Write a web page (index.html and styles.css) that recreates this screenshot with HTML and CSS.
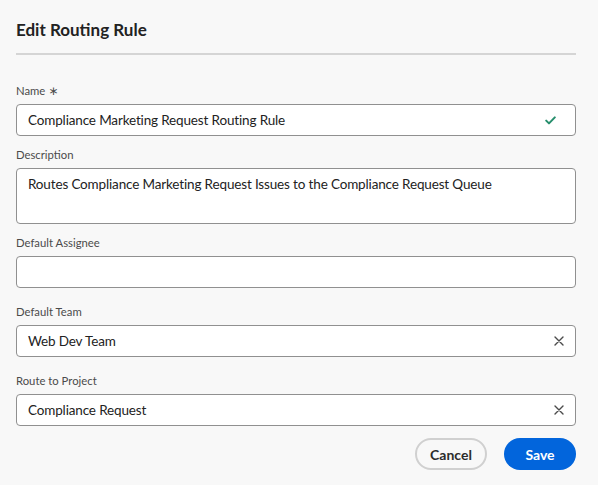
FILE: index.html
```html
<!DOCTYPE html>
<html>
	<head>
		<meta charset="UTF-8">
		<title>Edit Routing Rule</title>
		<link rel="stylesheet" href="styles.css">
	</head>
	<body>
		<div id="dialog">
			<h2 class="title">Edit Routing Rule</h2>
			<div class="divider"></div>
			<form class="form">
				<div class="field">
					<label>Name <span class="req">∗</span></label>
					<div class="input">
						<span class="value">Compliance Marketing Request Routing Rule</span>
						<svg class="check" width="11" height="9" viewBox="0 0 11 9"><path d="M1.2 4.6 L4 7.4 L9.8 1.4" fill="none" stroke="#268e6c" stroke-width="2" stroke-linecap="round" stroke-linejoin="round"/></svg>
					</div>
				</div>
				<div class="field">
					<label>Description</label>
					<div class="input area">
						<span class="value">Routes Compliance Marketing Request Issues to the Compliance Request Queue</span>
					</div>
				</div>
				<div class="field">
					<label>Default Assignee</label>
					<div class="input"></div>
				</div>
				<div class="field combo">
					<label>Default Team</label>
					<div class="input">
						<span class="value">Web Dev Team</span>
						<svg class="clear" width="10" height="10" viewBox="0 0 10 10"><path d="M1 1 L9 9 M9 1 L1 9" stroke="#4b4b4b" stroke-width="1.4" stroke-linecap="round"/></svg>
					</div>
				</div>
				<div class="field combo">
					<label>Route to Project</label>
					<div class="input">
						<span class="value">Compliance Request</span>
						<svg class="clear" width="10" height="10" viewBox="0 0 10 10"><path d="M1 1 L9 9 M9 1 L1 9" stroke="#4b4b4b" stroke-width="1.4" stroke-linecap="round"/></svg>
					</div>
				</div>
				<div class="buttons">
					<a class="btn cancel" href="javascript:;">Cancel</a>
					<a class="btn save" href="javascript:;">Save</a>
				</div>
			</form>
		</div>
	</body>
</html>
```
FILE: styles.css
```css
html,
body {
	width: 100%;
	height: 100%;
	margin: 0;
}

body {
	background: #f8f8f8;
	font-family: Lato, "Liberation Sans", sans-serif;
	color: #222;
}

#dialog {
	width: 560px;
	padding: 18px 22px 0 16px;
}

.title {
	margin: 0;
	font-size: 17px;
	line-height: 24px;
	font-weight: 700;
	color: #222;
}

.divider {
	height: 2px;
	background: #d5d5d5;
	margin-top: 11px;
}

.form {
	padding-top: 28px;
}

.field {
	display: flex;
	flex-direction: column;
}

.field + .field {
	margin-top: 11px;
}

.field.combo {
	margin-top: 16px;
}

.field label {
	font-size: 11.3px;
	line-height: 16px;
	color: #4b4b4b;
	margin-bottom: 5px;
}

.req {
	font-family: "DejaVu Sans", sans-serif;
	font-size: 12px;
}

.input {
	height: 32px;
	box-sizing: border-box;
	border: 1px solid #909090;
	border-radius: 4px;
	background: #fff;
	display: flex;
	align-items: center;
	padding: 0 11px 0 11px;
	font-size: 13.5px;
	letter-spacing: -0.15px;
}

.input .value {
	flex: 1;
}

.input.area {
	height: 56px;
	align-items: flex-start;
	padding-top: 6px;
	line-height: 18px;
}

.check {
	margin-right: 8px;
}

.buttons {
	display: flex;
	justify-content: flex-end;
	gap: 17px;
	margin-top: 12px;
}

.btn {
	text-decoration: none;
	width: 72px;
	height: 32px;
	box-sizing: border-box;
	border-radius: 16px;
	display: flex;
	align-items: center;
	justify-content: center;
	font-size: 14px;
	font-weight: 700;
}

.cancel {
	border: 2px solid #d0d0d0;
	color: #2c2c2c;
}

.save {
	background: #0265dc;
	color: #fff;
}
```
